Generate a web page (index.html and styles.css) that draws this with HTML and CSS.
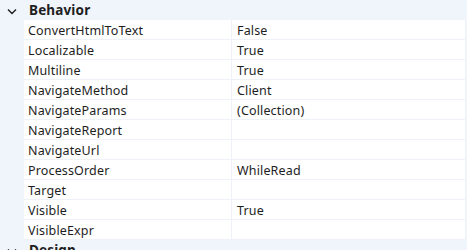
FILE: index.html
```html
<!DOCTYPE html>
<html>
<head>
    <link rel="stylesheet" href="styles.css">
</head>
<body>
<div class="grid">
    <div class="cat">
        <span class="chev"><svg width="10" height="7" viewBox="0 0 10 7"><path d="M1 1.5 L5 5.5 L9 1.5" fill="none" stroke="#1e1e1e" stroke-width="1.4"/></svg></span>
        <span class="cat-name">Behavior</span>
    </div>
    <div class="props">
        <div class="row"><div class="name">ConvertHtmlToText</div><div class="val">False</div></div>
        <div class="row"><div class="name">Localizable</div><div class="val">True</div></div>
        <div class="row"><div class="name">Multiline</div><div class="val">True</div></div>
        <div class="row"><div class="name">NavigateMethod</div><div class="val">Client</div></div>
        <div class="row"><div class="name">NavigateParams</div><div class="val">(Collection)</div></div>
        <div class="row"><div class="name">NavigateReport</div><div class="val"></div></div>
        <div class="row"><div class="name">NavigateUrl</div><div class="val"></div></div>
        <div class="row"><div class="name">ProcessOrder</div><div class="val">WhileRead</div></div>
        <div class="row"><div class="name">Target</div><div class="val"></div></div>
        <div class="row"><div class="name">Visible</div><div class="val">True</div></div>
        <div class="row"><div class="name">VisibleExpr</div><div class="val"></div></div>
    </div>
    <div class="cat">
        <span class="chev"><svg width="10" height="7" viewBox="0 0 10 7"><path d="M1 1.5 L5 5.5 L9 1.5" fill="none" stroke="#1e1e1e" stroke-width="1.4"/></svg></span>
        <span class="cat-name">Design</span>
    </div>
</div>
</body>
</html>
```

FILE: styles.css
```css
body {
    margin: 0;
    background-color: #f0f4fb;
    font-family: "Segoe UI", "Noto Sans", "Liberation Sans", sans-serif;
    font-size: 12.5px;
    letter-spacing: 0.15px;
    color: #1e1e1e;
    overflow: hidden;
}
.grid {
    width: 465px;
}
.cat {
    height: 20px;
    display: flex;
    align-items: center;
}
.chev {
    width: 24px;
    display: flex;
    justify-content: center;
    padding-top: 2px;
}
.cat-name {
    font-weight: bold;
    font-size: 13.5px;
    padding-left: 5px;
}
.props {
    margin-left: 24px;
    background-color: #ffffff;
}
.row {
    height: 20px;
    display: flex;
    border-bottom: 1px solid #eef1f7;
    box-sizing: border-box;
}
.name {
    width: 208px;
    box-sizing: border-box;
    border-right: 1px solid #eef1f7;
    padding: 2px 0 0 4px;
    line-height: 17px;
}
.val {
    flex: 1;
    padding: 2px 0 0 5px;
    line-height: 17px;
}
```
